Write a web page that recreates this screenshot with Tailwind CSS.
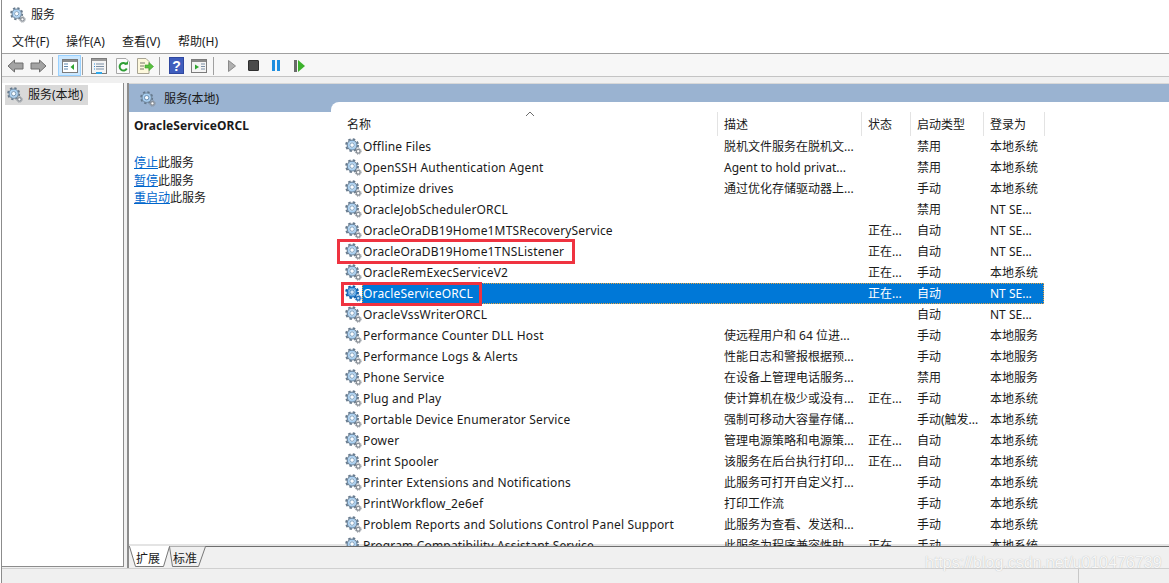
<!DOCTYPE html>
<html lang="zh-CN">
<head>
<meta charset="UTF-8">
<title>服务</title>
<script src="https://cdn.jsdelivr.net/npm/@tailwindcss/browser@4"></script>
</head>
<body class="bg-white">
<!-- shared icons -->
<svg class="hidden" width="0" height="0">
  <symbol id="gear" viewBox="0 0 18 18">
    <circle cx="7.500" cy="7.500" r="6.300" fill="none" stroke="#66798c" stroke-width="2" stroke-dasharray="2.600 2.350"/>
    <circle cx="7.500" cy="7.500" r="5" fill="none" stroke="#70879d" stroke-width="1.600"/>
    <circle cx="7.500" cy="7.500" r="3.800" fill="none" stroke="#a9d0f2" stroke-width="1.600"/>
    <circle cx="7.500" cy="7.500" r="2.400" fill="#fbfdff" stroke="#4f7ea8" stroke-width=".8"/>
    <circle cx="14" cy="14" r="2" fill="#fff" stroke="#868d95" stroke-width="1.400"/>
    <circle cx="14" cy="14" r="3.200" fill="none" stroke="#868d95" stroke-width="1" stroke-dasharray="1.200 1.300"/>
  </symbol>
  <symbol id="gear-selected" viewBox="0 0 18 18">
    <circle cx="7.500" cy="7.500" r="6.300" fill="none" stroke="#0f5ea6" stroke-width="2" stroke-dasharray="2.600 2.350"/>
    <circle cx="7.500" cy="7.500" r="5" fill="none" stroke="#1668b4" stroke-width="1.600"/>
    <circle cx="7.500" cy="7.500" r="3.800" fill="none" stroke="#5aa6e6" stroke-width="1.600"/>
    <circle cx="7.500" cy="7.500" r="2.400" fill="#cfe6fa" stroke="#0f5ea6" stroke-width=".8"/>
    <circle cx="14" cy="14" r="2" fill="#bcdcf6" stroke="#1b6cb8" stroke-width="1.400"/>
    <circle cx="14" cy="14" r="3.200" fill="none" stroke="#1b6cb8" stroke-width="1" stroke-dasharray="1.200 1.300"/>
  </symbol>
</svg>

<div class="w-[1168px] h-[583px] overflow-hidden ml-px border-l border-[#8c8c8c] flex flex-col text-[12px] text-[#1a1a1a] font-['Noto_Sans','Noto_Sans_CJK_SC',sans-serif]">

  <!-- title bar -->
  <div class="h-[28px] flex items-center pl-[8px] pt-[2px] gap-[5px]">
    <svg class="w-[16px] h-[16px]"><use href="#gear"/></svg>
    <span>服务</span>
  </div>

  <!-- menu -->
  <div class="h-[22px] flex items-center pl-[10px] pt-[3px] border-b border-[#a0a0a0] box-content">
    <span class="w-[54px]">文件(F)</span>
    <span class="w-[56px]">操作(A)</span>
    <span class="w-[56px]">查看(V)</span>
    <span>帮助(H)</span>
  </div>

  <!-- toolbar -->
  <div class="h-[21px] pt-px flex items-center bg-[#f7f7f7] border-b border-[#c4c4c4] box-content">
    <svg class="ml-[5px] w-[17px] h-[14px]" viewBox="0 0 17 14"><path d="M1 7 7.500 1V4H16V10H7.500V13Z" fill="#a3a3a3" stroke="#6f6f6f"/></svg>
    <svg class="ml-[6px] w-[17px] h-[14px]" viewBox="0 0 17 14"><path d="M16 7 9.500 1V4H1V10H9.500V13Z" fill="#a3a3a3" stroke="#6f6f6f"/></svg>
    <div class="ml-[5px] w-px h-[18px] bg-[#a0a0a0]"></div>
    <div class="ml-[5px] w-[23px] h-[21px] bg-[#cce8ff] border border-[#99d1ff] flex items-center justify-center">
      <svg class="w-[16px] h-[14px]" viewBox="0 0 16 14"><rect x=".5" y=".5" width="15" height="13" fill="#fff" stroke="#7b7b7b"/><rect x="1" y="1" width="14" height="2" fill="#8a8a8a"/><path d="M2 5H6M2 7.500H6M2 10H6" stroke="#5f87ad"/><path d="M12 5V11L8.500 8Z" fill="#2fa52f"/></svg>
    </div>
    <div class="ml-[1px] w-px h-[18px] bg-[#a0a0a0]"></div>
    <svg class="ml-[8px] w-[16px] h-[16px]" viewBox="0 0 16 16"><rect x=".5" y=".5" width="15" height="15" fill="#f4f4f4" stroke="#7b7b7b"/><rect x="1" y="1" width="14" height="2" fill="#9a9a9a"/><path d="M5 6H13M5 8.500H13M5 11H13" stroke="#7b8fa5"/><path d="M3 6H4M3 8.500H4M3 11H4" stroke="#2b8fe0"/><rect x="5" y="14" width="6" height="2" fill="#2fa8ea"/></svg>
    <svg class="ml-[9px] w-[14px] h-[16px]" viewBox="0 0 14 16"><path d="M.5.500H10L13.500 4V15.500H.5Z" fill="#fbfbfb" stroke="#a8a8a8"/><path d="M10.500 6.500A3.800 3.800 0 1 0 10.800 10.500" fill="none" stroke="#2f9e35" stroke-width="2"/><path d="M8 6.500H12V3Z" fill="#2f9e35"/></svg>
    <svg class="ml-[7px] w-[17px] h-[16px]" viewBox="0 0 17 16"><path d="M.5.500H9L12 3.500V15.500H.5Z" fill="#fdf8dc" stroke="#a8a494"/><path d="M3 5H8M3 8H7M3 11H7" stroke="#77776a"/><path d="M8 7H12V4.500L16.500 8.500 12 12.500V10H8Z" fill="#58c03e" stroke="#3b9a2b" stroke-width=".6"/></svg>
    <div class="ml-[5px] w-px h-[18px] bg-[#a0a0a0]"></div>
    <svg class="ml-[9px] w-[15px] h-[17px]" viewBox="0 0 15 17"><rect width="15" height="17" fill="#2f479f"/><rect x="1" y="1" width="13" height="15" fill="#3f5dbd"/><text x="7.500" y="14" text-anchor="middle" font-size="14" font-weight="700" fill="#fff" font-family="Liberation Sans">?</text></svg>
    <svg class="ml-[7px] w-[16px] h-[14px]" viewBox="0 0 16 14"><rect x=".5" y=".5" width="15" height="13" fill="#f4f4f4" stroke="#7b7b7b"/><rect x="1" y="1" width="14" height="2" fill="#8a8a8a"/><path d="M4 5.500V10.500L8 8Z" fill="#2fa52f"/><path d="M10 5H14M10 7.500H14M10 10H14" stroke="#7b8fa5"/></svg>
    <div class="ml-[6px] w-px h-[18px] bg-[#a0a0a0]"></div>
    <svg class="ml-[14px] w-[8px] h-[12px]" viewBox="0 0 8 12"><path d="M.5.500 7.500 6 .5 11.500Z" fill="#b0b0b0" stroke="#8a8a8a"/></svg>
    <div class="ml-[12px] w-[11px] h-[11px] rounded-[1px] bg-[#4a4a4a] border border-[#2e2e2e]"></div>
    <div class="ml-[13px] w-[3px] h-[11px] bg-[#1f8fe0]"></div>
    <div class="ml-[2px] w-[3px] h-[11px] bg-[#1f8fe0]"></div>
    <div class="ml-[14px] w-[3px] h-[12px] bg-[#6a6a6a]"></div>
    <svg class="ml-[1px] w-[7px] h-[12px]" viewBox="0 0 7 12"><path d="M0 0 7 6 0 12Z" fill="#3cb22c"/></svg>
  </div>

  <!-- panes -->
  <div class="flex-1 min-h-0 bg-[#f0f0f0] pt-[6px] flex">
    <div class="w-[122px] bg-white border-r border-b border-[#8c8c8c] mb-px pt-[2px] pl-[3px]">
      <div class="w-[83px] h-[20px] bg-[#d9d9d9] flex items-center pl-[2px] gap-[5px]">
        <svg class="w-[16px] h-[16px] shrink-0"><use href="#gear"/></svg>
        <span>服务(本地)</span>
      </div>
    </div>

    <div class="ml-[3px] flex-1 min-w-0 flex flex-col border-l-2 border-[#8c8c8c]">
      <div class="flex-1 min-h-0 flex bg-white border-t border-[#d8d8d8]">
        <!-- action side -->
        <div class="w-[202px] shrink-0 flex flex-col">
          <div class="h-[28px] bg-[#9ab3d1] flex items-center pl-[11px] pt-px gap-[8px]">
            <svg class="w-[16px] h-[16px]"><use href="#gear"/></svg>
            <span>服务(本地)</span>
          </div>
          <div class="pl-[5px] pt-[5px]">
            <div class="font-bold tracking-[0.1px]">OracleServiceORCL</div>
            <div class="mt-[19px] flex flex-col leading-[17.500px]">
              <div><span class="text-[#0066cc] underline">停止</span>此服务</div>
              <div><span class="text-[#0066cc] underline">暂停</span>此服务</div>
              <div><span class="text-[#0066cc] underline">重启动</span>此服务</div>
            </div>
          </div>
        </div>
        <!-- list -->
        <div class="flex-1 min-w-0 bg-[#9ab3d1] pt-[18px] flex">
          <div class="flex-1 min-w-0 bg-white rounded-tl-[8px] overflow-hidden">
            <div class="relative h-[34px] pt-[10px] grid grid-cols-[387px_144px_49px_73px_61px] w-[714px]">
              <svg class="absolute left-[194px] top-[9px] w-[10px] h-[6px]" viewBox="0 0 10 6"><path d="M1 5 5 1 9 5" fill="none" stroke="#6d6d6d"/></svg>
              <div class="pl-[16px] pt-px h-[24px] flex items-center border-r border-[#e3e3e3]">名称</div>
              <div class="pl-[6px] pt-px h-[24px] flex items-center border-r border-[#e3e3e3]">描述</div>
              <div class="pl-[6px] pt-px h-[24px] flex items-center border-r border-[#e3e3e3]">状态</div>
              <div class="pl-[6px] pt-px h-[24px] flex items-center border-r border-[#e3e3e3]">启动类型</div>
              <div class="pl-[6px] pt-px h-[24px] flex items-center border-r border-[#e3e3e3]">登录为</div>
            </div>
            <div id="rows"></div>
          </div>
        </div>
      </div>

      <!-- tabs -->
      <div class="h-[22px] shrink-0 bg-[#f0f0f0] border-t border-[#6e6e6e] shadow-[0_-2px_0_#e4e4e4]">
        <svg class="block -mt-px" width="90" height="22" viewBox="0 0 90 22">
          <path d="M.5.500 6.500 20.500H34.500L40.500.500" fill="#fff" stroke="#777"/>
          <path d="M40.500.500 43.500 20.500H69.500L76.500.500" fill="#f0f0f0" stroke="#777"/>
          <path d="M1 .5H40" stroke="#fff"/>
          <text x="7" y="17" font-size="12" fill="#1a1a1a" font-family="Noto Sans CJK SC">扩展</text>
          <text x="44" y="17" font-size="12" fill="#1a1a1a" font-family="Noto Sans CJK SC">标准</text>
        </svg>
      </div>
    </div>
  </div>

  <!-- status bar -->
  <div class="relative h-[14px] shrink-0 bg-[#f0f0f0] border-t border-[#d0d0d0] box-content flex justify-end pr-[90px]">
    <div class="w-px h-[14px] bg-[#c8c8c8]"></div>
    <span class="absolute left-[923px] -top-[14px] leading-none text-[16px] text-[#f7f7f7] font-['Liberation_Sans',sans-serif] [text-shadow:0_0_1px_#b0b0b0]">https://blog.csdn.net/u010476739</span>
  </div>
</div>

<script>
  const services = [
    ['Offline Files', '脱机文件服务在脱机文...', '', '禁用', '本地系统'],
    ['OpenSSH Authentication Agent', 'Agent to hold privat...', '', '禁用', '本地系统'],
    ['Optimize drives', '通过优化存储驱动器上...', '', '手动', '本地系统'],
    ['OracleJobSchedulerORCL', '', '', '禁用', 'NT SE...'],
    ['OracleOraDB19Home1MTSRecoveryService', '', '正在...', '自动', 'NT SE...'],
    ['OracleOraDB19Home1TNSListener', '', '正在...', '自动', 'NT SE...'],
    ['OracleRemExecServiceV2', '', '正在...', '手动', '本地系统'],
    ['OracleServiceORCL', '', '正在...', '自动', 'NT SE...'],
    ['OracleVssWriterORCL', '', '', '自动', 'NT SE...'],
    ['Performance Counter DLL Host', '使远程用户和 64 位进...', '', '手动', '本地服务'],
    ['Performance Logs &amp; Alerts', '性能日志和警报根据预...', '', '手动', '本地服务'],
    ['Phone Service', '在设备上管理电话服务...', '', '禁用', '本地服务'],
    ['Plug and Play', '使计算机在极少或没有...', '正在...', '手动', '本地系统'],
    ['Portable Device Enumerator Service', '强制可移动大容量存储...', '', '手动(触发...', '本地系统'],
    ['Power', '管理电源策略和电源策...', '正在...', '自动', '本地系统'],
    ['Print Spooler', '该服务在后台执行打印...', '正在...', '自动', '本地系统'],
    ['Printer Extensions and Notifications', '此服务可打开自定义打...', '', '手动', '本地系统'],
    ['PrintWorkflow_2e6ef', '打印工作流', '', '手动', '本地系统'],
    ['Problem Reports and Solutions Control Panel Support', '此服务为查看、发送和...', '', '手动', '本地系统'],
    ['Program Compatibility Assistant Service', '此服务为程序兼容性助...', '正在...', '手动', '本地系统'],
  ];

  document.getElementById('rows').innerHTML = services.map(function (s) {
    const selected = s[0] === 'OracleServiceORCL';
    let box = '';
    if (s[0] === 'OracleOraDB19Home1TNSListener') {
      box = '<div class="absolute left-[6px] -top-[2px] w-[238px] h-[25px] border-[3px] border-[#ef3340]"></div>';
    }
    if (selected) {
      box = '<div class="absolute left-[10px] -top-px w-[141px] h-[24px] border-[3px] border-[#ef3340]"></div>';
    }
    const cells = selected
      ? 'bg-[#0078d7] text-white outline-1 outline-dotted -outline-offset-1 outline-[#e8a33d]'
      : '';
    const icon = selected ? '#gear-selected' : '#gear';
    return `<div class="relative h-[21px] flex items-center">
      <div class="w-[31px] pl-[14px] shrink-0"><svg class="w-[17px] h-[17px] block"><use href="${icon}"/></svg></div>
      <div class="w-[682px] h-[21px] grid grid-cols-[355px_144px_49px_73px_61px] items-center ${cells}">
        <div class="pl-px tracking-[0.17px] whitespace-nowrap overflow-hidden">${s[0]}</div>
        <div class="pl-[7px] whitespace-nowrap overflow-hidden">${s[1]}</div>
        <div class="pl-[7px] whitespace-nowrap overflow-hidden">${s[2]}</div>
        <div class="pl-[7px] whitespace-nowrap overflow-hidden">${s[3]}</div>
        <div class="pl-[7px] whitespace-nowrap overflow-hidden">${s[4]}</div>
      </div>
      ${box}
    </div>`;
  }).join('');
</script>
</body>
</html>
